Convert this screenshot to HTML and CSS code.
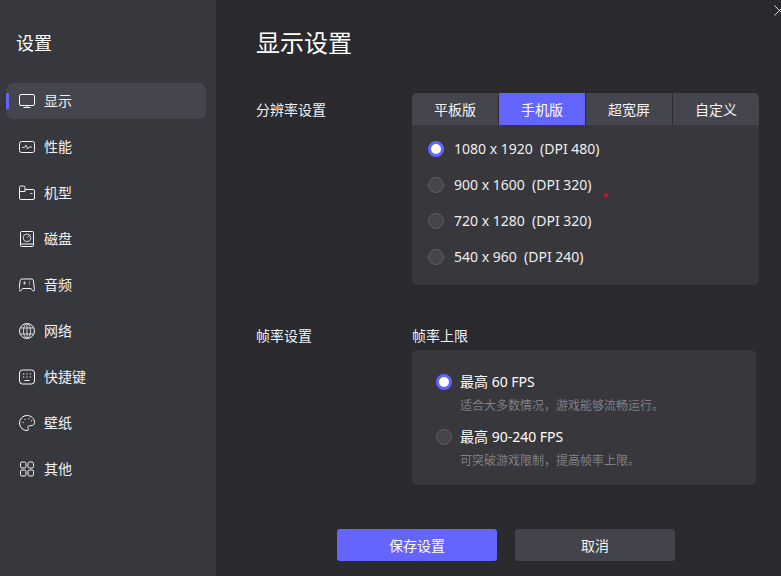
FILE: index.html
```html
<!DOCTYPE html>
<html lang="zh">
<head>
<meta charset="utf-8">
<title>设置</title>
<link rel="stylesheet" href="styles.css">
</head>
<body>
<div class="app">
  <aside class="sidebar">
    <div class="side-title">设置</div>
    <nav class="menu">
      <a class="item active"><svg class="ico" viewBox="0 0 16 16"><rect x=".5" y="1.5" width="15" height="11" rx="1.5"/><path d="M8 12.500v2M4.500 14.500h7"/></svg>显示</a>
      <a class="item"><svg class="ico" viewBox="0 0 16 16"><rect x=".5" y="2.500" width="15" height="11" rx="2"/><path d="M3 8.500h2.500l1.500-2.500 1.500 4 1.500-2h3" class="thin"/></svg>性能</a>
      <a class="item"><svg class="ico" viewBox="0 0 16 16"><path d="M2 14.500a1.500 1.500 0 0 1-1.500-1.500V2.500A1.500 1.500 0 0 1 2 1h2.500A1.500 1.500 0 0 1 6 2.500v2h8A1.500 1.500 0 0 1 15.500 6v7a1.500 1.500 0 0 1-1.500 1.500zM.5 6.500H6V4.500M11.500 8.500h2"/></svg>机型</a>
      <a class="item"><svg class="ico" viewBox="0 0 16 16"><rect x="1.500" y=".5" width="13" height="15" rx="1"/><path d="M1.500 13h13"/><circle cx="8" cy="6.800" r="3.800" class="thin"/><path d="M8 6.800l3-3" class="thin"/></svg>磁盘</a>
      <a class="item"><svg class="ico" viewBox="0 0 16 16"><path d="M3.500 2h9q1.500 0 1.800 1.500l1.200 9q.2 1.500-1 1.500-.8 0-1.500-1l-1-1.500h-8.500l-1 1.500q-.7 1-1.500 1-1.200 0-1-1.500l1.200-9q.3-1.500 1.800-1.500z"/><path d="M4 6h3M5.500 4.500v3M10 5h1M10 7h1" class="thin"/></svg>音频</a>
      <a class="item"><svg class="ico" viewBox="0 0 16 16"><circle cx="8" cy="8" r="7.500"/><ellipse cx="8" cy="8" rx="3.500" ry="7.500" class="thin"/><path d="M8 .5v15M1.500 5h13M1.500 11h13" class="thin"/></svg>网络</a>
      <a class="item"><svg class="ico" viewBox="0 0 16 16"><rect x=".5" y="1" width="15" height="14" rx="3"/><path d="M4 5h1.200M7.400 5h1.200M10.800 5h1.200M4 8h1.200M7.400 8h1.200M10.800 8h1.200M5.500 11.500h5"/></svg>快捷键</a>
      <a class="item"><svg class="ico" viewBox="0 0 16 16"><path d="M8 .5a7.500 7.500 0 1 0 0 15q1.500 0 1.500-1.300c0-1.200-1-1.500-.6-2.500.4-1.100 1.700-1 3-1 1.800 0 3.600-.6 3.600-3.200C15.500 3.500 12.200.5 8 .5z"/><path d="M3.500 7.500h1.100M5.500 4.500h1.100M9.500 3.800h1.100M12 6h1.100"/></svg>壁纸</a>
      <a class="item"><svg class="ico" viewBox="0 0 16 16"><rect x="1.500" y="1" width="5.500" height="6" rx="1.500"/><rect x="9" y="1" width="5.500" height="6" rx="1.500"/><rect x="1.500" y="9" width="5.500" height="6" rx="1.500"/><rect x="9" y="9" width="5.500" height="6" rx="1.500"/></svg>其他</a>
    </nav>
  </aside>
  <main class="main">
    <h1 class="page-title">显示设置</h1>
    <section class="row res-row">
      <div class="row-label">分辨率设置</div>
      <div class="res-box">
        <div class="tabs">
          <div class="tab">平板版</div>
          <div class="tab on">手机版</div>
          <div class="tab">超宽屏</div>
          <div class="tab">自定义</div>
        </div>
        <div class="res-list">
          <div class="radio-row"><span class="radio checked"></span>1080 x 1920&nbsp;&nbsp;(DPI 480)</div>
          <div class="radio-row"><span class="radio"></span>900 x 1600&nbsp;&nbsp;(DPI 320)</div>
          <div class="radio-row"><span class="radio"></span>720 x 1280&nbsp;&nbsp;(DPI 320)</div>
          <div class="radio-row"><span class="radio"></span>540 x 960&nbsp;&nbsp;(DPI 240)</div>
          <span class="red-dot"></span>
        </div>
      </div>
    </section>
    <section class="row fps-row">
      <div class="row-label">帧率设置</div>
      <div class="fps-col">
        <div class="sub-label">帧率上限</div>
        <div class="fps-box">
          <div class="fps-opt">
            <div class="radio-row"><span class="radio checked"></span>最高 60 FPS</div>
            <div class="desc">适合大多数情况，游戏能够流畅运行。</div>
          </div>
          <div class="fps-opt">
            <div class="radio-row"><span class="radio"></span>最高 90-240 FPS</div>
            <div class="desc">可突破游戏限制，提高帧率上限。</div>
          </div>
        </div>
      </div>
    </section>
    <div class="actions">
      <button class="btn primary">保存设置</button>
      <button class="btn">取消</button>
    </div>
    <svg class="close" viewBox="0 0 11 11"><path d="M.5.5l10 10M10.500.5l-10 10"/></svg>
  </main>
</div>
</body>
</html>
```
FILE: styles.css
```css
* { box-sizing: border-box; }
html, body { margin: 0; height: 100%; overflow: hidden; }
body {
  background: #2a2a2f;
  color: #f2f2f4;
  font-family: "Noto Sans", "Noto Sans CJK SC", sans-serif;
  font-size: 14px;
}
.app { display: flex; width: 781px; height: 576px; }
.sidebar {
  width: 216px;
  flex: none;
  background: #37383d;
  padding: 31px 10px 0 6px;
}
.side-title { font-size: 18px; line-height: 24px; padding-left: 10px; margin-bottom: 28px; color: #fff; }
.menu { display: flex; flex-direction: column; gap: 10px; }
.item {
  position: relative;
  display: flex;
  align-items: center;
  gap: 9px;
  height: 36px;
  padding-left: 13px;
  padding-bottom: 1px;
  border-radius: 7px;
  line-height: 20px;
}
.item.active { background: #45464d; }
.item.active::before {
  content: "";
  position: absolute;
  left: 0;
  top: 10px;
  width: 3px;
  height: 16px;
  border-radius: 1px;
  background: #6464ff;
}
.ico { width: 16px; height: 16px; flex: none; margin-top: 1px; fill: none; stroke: #f6f6f8; stroke-width: 1; }
.ico .thin { stroke: #d4d4d8; }
.main { position: relative; flex: 1; padding: 27px 0 0 40px; }
.page-title { margin: 0 0 34px; font-size: 24px; line-height: 32px; font-weight: 400; color: #fff; }
.row { display: flex; }
.row-label { width: 156px; flex: none; line-height: 20px; }
.res-row .row-label { padding-top: 7px; }
.res-box { width: 347px; height: 192px; background: #37373c; border-radius: 5px; overflow: hidden; }
.tabs { display: flex; gap: 1px; height: 32px; background: #2a2a2f; }
.tab { flex: 1; display: flex; align-items: center; justify-content: center; background: #45464d; }
.tab.on { background: #6464ff; color: #fff; }
.res-list { position: relative; display: flex; flex-direction: column; padding: 6px 16px 0; }
.radio-row { display: flex; align-items: center; gap: 10px; height: 36px; padding-bottom: 2px; color: #eeeeef; }
.radio {
  width: 16px;
  height: 16px;
  flex: none;
  margin-top: 2px;
  border-radius: 50%;
  background: #45464b;
  border: 1px solid #5c5c62;
}
.radio.checked { background: #fff; border: 3.5px solid #6464ff; }
.red-dot {
  position: absolute;
  left: 192px;
  top: 68px;
  width: 4px;
  height: 4px;
  border-radius: 50%;
  background: #e0101c;
}
.fps-row { margin-top: 41px; }
.sub-label { line-height: 20px; margin-bottom: 4px; }
.fps-box {
  width: 344px;
  height: 135px;
  padding: 14px 24px 0;
  background: #37373c;
  border-radius: 5px;
}
.fps-opt { height: 55px; }
.fps-opt .radio-row { height: 36px; gap: 8px; color: #fff; }
.desc { margin: -3px 0 0 24px; font-size: 12px; line-height: 18px; color: #808085; }
.actions { display: flex; gap: 18px; margin: 44px 0 0 81px; }
.btn {
  width: 160px;
  height: 32px;
  border: 0;
  border-radius: 3px;
  background: #42434b;
  color: #f2f2f4;
  font: inherit;
}
.btn.primary { background: #6464ff; color: #fff; }
.close { position: absolute; right: -4px; top: 5px; width: 11px; height: 11px; fill: none; stroke: #d8d8da; stroke-width: 1; }
```
